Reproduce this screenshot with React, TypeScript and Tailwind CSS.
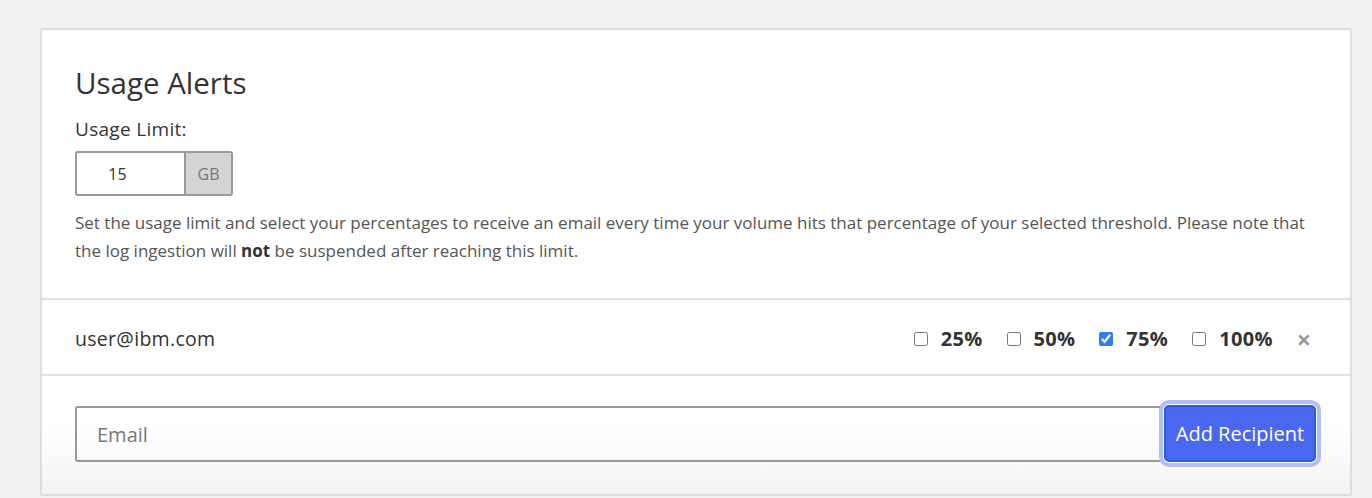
import React from "react";

const levels = [
  { value: 25, checked: false },
  { value: 50, checked: false },
  { value: 75, checked: true },
  { value: 100, checked: false },
];

const App: React.FC = () => {
  return (
    <div
      className="h-[498px] bg-[#f0f1f3] pl-[40px] pt-[28px] overflow-hidden"
      style={{ fontFamily: "'Open Sans', 'Noto Sans', sans-serif" }}
    >
      <div className="w-[1312px] border-2 border-[#dddddd] rounded-[3px] bg-white">
        <div className="px-[33px] pt-[33px] pb-[33px] border-b-2 border-[#e2e2e2]">
          <h1 className="text-[29.5px] leading-[40px] text-[#333]">Usage Alerts</h1>
          <div className="mt-[14px] text-[19px] leading-[24px] tracking-[0.3px] text-[#333]">Usage Limit:</div>
          <div className="mt-[10px] flex w-[158px] h-[45px] border-2 border-[#999] rounded-[3px] overflow-hidden">
            <input
              defaultValue="15"
              className="w-[107px] text-center text-[16px] text-[#333] outline-none pr-[26px]"
            />
            <div className="flex-1 bg-[#d4d4d4] border-l-2 border-[#999] flex items-center justify-center text-[16px] text-[#777]">
              GB
            </div>
          </div>
          <p className="mt-[13px] text-[17px] leading-[28px] text-[#555]">
            Set the usage limit and select your percentages to receive an email every time your volume hits that
            percentage of your selected threshold. Please note that the log ingestion will <strong className="text-[#333]">not</strong> be
            suspended after reaching this limit.
          </p>
        </div>

        <div className="h-[76px] px-[33px] flex items-center justify-between border-b-2 border-[#e2e2e2]">
          <span className="pt-[4px] text-[19.5px] tracking-[0.3px] text-[#333]">user@ibm.com</span>
          <div className="flex items-center pt-[4px] pr-[6px]">
            {levels.map((l) => (
              <label key={l.value} className="mr-[24px] flex items-center gap-[13px] text-[20px] tracking-[0.3px] font-bold text-[#333]">
                <input
                  type="checkbox"
                  defaultChecked={l.checked}
                  className="w-[14px] h-[14px] m-0 accent-[#2f7cf6]"
                />
                {l.value}%
              </label>
            ))}
            <span className="text-[25px] font-bold text-[#999] leading-none">×</span>
          </div>
        </div>

        <div className="px-[33px] pt-[30px] pb-[32px] flex bg-gradient-to-b from-white from-40% to-[#f4f4f4]">
          <input
            placeholder="Email"
            className="flex-1 h-[56px] border-2 border-[#999] rounded-[3px] px-[20px] text-[20px] placeholder:text-[#777] outline-none"
          />
          <button className="ml-[1px] mr-[1px] w-[152px] h-[57px] -mt-[1px] rounded-[5px] border-2 border-[#2362cf] bg-[#4a67f0] text-white text-[20px] shadow-[0_0_0_1px_#fff,0_0_0_5px_#b4bcf8]">
            Add Recipient
          </button>
        </div>
      </div>
    </div>
  );
};

export default App;
